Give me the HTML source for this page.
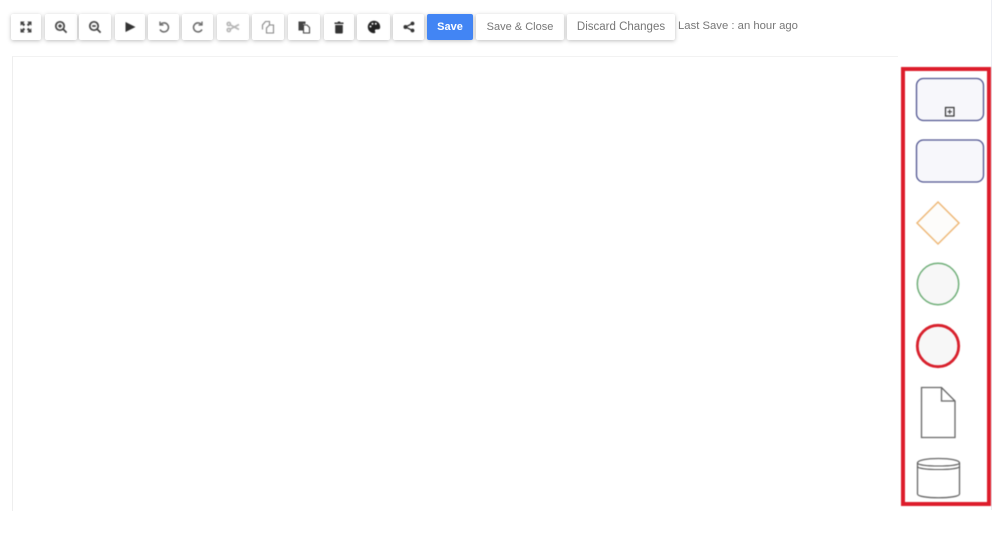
<!DOCTYPE html>
<html><head><meta charset="utf-8"><style>
html,body{margin:0;padding:0;background:#fff;width:1000px;height:547px;overflow:hidden;font-family:"Liberation Sans",sans-serif}
.b{position:absolute;top:14px;height:26px;background:#fff;border-radius:2px;box-shadow:0 1px 4px rgba(0,0,0,.26);text-align:center;font-size:11px;line-height:26px;color:#777}
.b svg{position:absolute;left:50%;top:50%;margin:-7px 0 0 -7px;width:14px;height:14px;filter:blur(.4px)}
.t{filter:blur(.35px)}
</style></head><body>
<div style="position:absolute;left:12px;top:56px;width:885px;height:454px;border-left:1px solid #eee;border-top:1px solid #f2f2f2"></div>
<div style="position:absolute;left:991px;top:0;width:1px;height:510px;background:#eceef3"></div>

<div class="b" style="left:11px;width:30px"><svg viewBox="0 0 14 14" fill="#444"><path d="M1.500 1.500h4.200L4.500 2.900 6.200 4.600 4.600 6.200 2.900 4.500 1.500 5.700zM12.500 1.500v4.200L11.100 4.500 9.400 6.200 7.800 4.600 9.500 2.900 8.300 1.500zM1.500 12.500V8.300l1.400 1.200L4.600 7.800l1.600 1.600-1.700 1.700 1.200 1.400zM12.500 12.500H8.300l1.200-1.400-1.700-1.700 1.600-1.600 1.700 1.700 1.200-1.400z"/></svg></div>
<div class="b" style="left:45px;width:32px"><svg viewBox="0 0 14 14" fill="none" stroke="#444" stroke-width="1.700"><circle cx="6" cy="6" r="4.200"/><path d="M9 9l3.600 3.600M4.200 6h3.600M6 4.200v3.600" /></svg></div>
<div class="b" style="left:79px;width:32px"><svg viewBox="0 0 14 14" fill="none" stroke="#444" stroke-width="1.700"><circle cx="6" cy="6" r="4.200"/><path d="M9 9l3.600 3.600M4.200 6h3.600"/></svg></div>
<div class="b" style="left:115px;width:30px"><svg viewBox="0 0 14 14" fill="#333"><path d="M2.500 2l10 5-10 5z"/></svg></div>
<div class="b" style="left:148px;width:31px"><svg viewBox="0 0 14 14" fill="none" stroke="#666" stroke-width="1.500"><path d="M3.800 4.200A4.500 4.500 0 1 1 3 9.500"/><path d="M3 1.500v3.500h3.500" stroke-width="1.300"/></svg></div>
<div class="b" style="left:182px;width:31px"><svg viewBox="0 0 14 14" fill="none" stroke="#666" stroke-width="1.500"><path d="M10.200 4.200A4.500 4.500 0 1 0 11 9.500"/><path d="M11 1.500v3.500H7.500" stroke-width="1.300"/></svg></div>
<div class="b" style="left:217px;width:32px"><svg viewBox="0 0 14 14" fill="none" stroke="#b5b5b5" stroke-width="1.600"><circle cx="2.800" cy="4" r="1.600"/><circle cx="2.800" cy="10" r="1.600"/><path d="M4.200 4.800l8.800 4.700M4.200 9.200L13 4.500"/></svg></div>
<div class="b" style="left:252px;width:32px"><svg viewBox="0 0 14 14" fill="none" stroke="#888" stroke-width="1.100"><path d="M1.500 9.500V5l3-3.500h4V5"/><path d="M5.500 13V8l3-3h4v8z"/></svg></div>
<div class="b" style="left:288px;width:32px"><svg viewBox="0 0 14 14"><path d="M1.500 1.500h7v2.500H6v6.500H1.500z" fill="#444"/><path d="M6.500 5h3.500l2.500 2.500v5.500h-6z" fill="#fff" stroke="#444" stroke-width="1.100"/></svg></div>
<div class="b" style="left:324px;width:30px"><svg viewBox="0 0 14 14" fill="#333"><path d="M2.500 2.500h3l.5-1h2l.5 1h3V4h-9zM3.200 5h7.600v7.500a1 1 0 0 1-1 1H4.200a1 1 0 0 1-1-1z"/></svg></div>
<div class="b" style="left:357px;width:33px"><svg viewBox="0 0 14 14"><path d="M7 .8a6.200 6.200 0 0 0 0 12.400c1.400 0 1.600-1 1.100-1.800-.6-1 .1-2 1.200-2h2c1.200 0 1.900-1 1.900-2.400C13.200 3.300 10.400.8 7 .8z" fill="#222"/><circle cx="3.500" cy="6.500" r="1" fill="#fff"/><circle cx="5.500" cy="3.800" r="1" fill="#fff"/><circle cx="8.800" cy="3.800" r="1" fill="#fff"/></svg></div>
<div class="b" style="left:393px;width:31px"><svg viewBox="0 0 14 14" fill="#333"><circle cx="3.500" cy="7" r="2"/><circle cx="10.500" cy="3.500" r="1.900"/><circle cx="10.500" cy="10.500" r="1.900"/><path d="M3.500 7l7-3.500M3.500 7l7 3.500" stroke="#333" stroke-width="1.300"/></svg></div>
<div class="b t" style="left:427px;width:46px;background:#4285f4;color:#fff;font-weight:bold;font-size:11px">Save</div>
<div class="b" style="left:476px;width:88px"><span class="t" style="display:block">Save &amp; Close</span></div>
<div class="b" style="left:567px;width:108px"><span class="t" style="display:block;font-size:11.5px">Discard Changes</span></div>
<div class="t" style="position:absolute;left:678px;top:18px;font-size:11.3px;line-height:16px;color:#777;white-space:nowrap">Last Save : an hour ago</div>

<svg style="position:absolute;left:0;top:0;filter:blur(.4px)" width="1000" height="547" fill="none">
<rect x="903" y="69" width="86" height="435" stroke="#dd1c2b" stroke-width="4"/>
<rect x="916.500" y="78.500" width="67" height="42" rx="7" fill="#f7f7fb" stroke="#4f5490" stroke-width="1.300"/>
<rect x="945.500" y="107.500" width="8.500" height="8.500" stroke="#333" stroke-width="1.200"/>
<path d="M947.500 111.700h4.500M949.700 109.500v4.500" stroke="#333"/>
<rect x="916.500" y="140" width="67" height="42" rx="7" fill="#f7f7fb" stroke="#4f5490" stroke-width="1.300"/>
<path d="M938 202l21 21-21 21-21-21z" fill="#fdfcfa" stroke="#eeb878" stroke-width="1.500"/>
<circle cx="938" cy="284" r="20.700" fill="#f7f7f7" stroke="#6fae78" stroke-width="1.500"/>
<circle cx="938" cy="346" r="20.700" fill="#f7f7f7" stroke="#d8202c" stroke-width="2.800"/>
<path d="M921.500 387.500h20l13.500 13.500v36.500h-33.500zM941.500 387.500v13.500h13.500" fill="#fff" stroke="#666" stroke-width="1.300"/>
<path d="M917.500 463c0-6 42-6 42 0v31c0 5-42 5-42 0z" fill="#fff" stroke="#666" stroke-width="1.300"/>
<path d="M917.500 463c0 4 42 4 42 0M917.500 466.500c0 4 42 4 42 0" stroke="#555" stroke-width="1.100"/>
</svg>
</body></html>
